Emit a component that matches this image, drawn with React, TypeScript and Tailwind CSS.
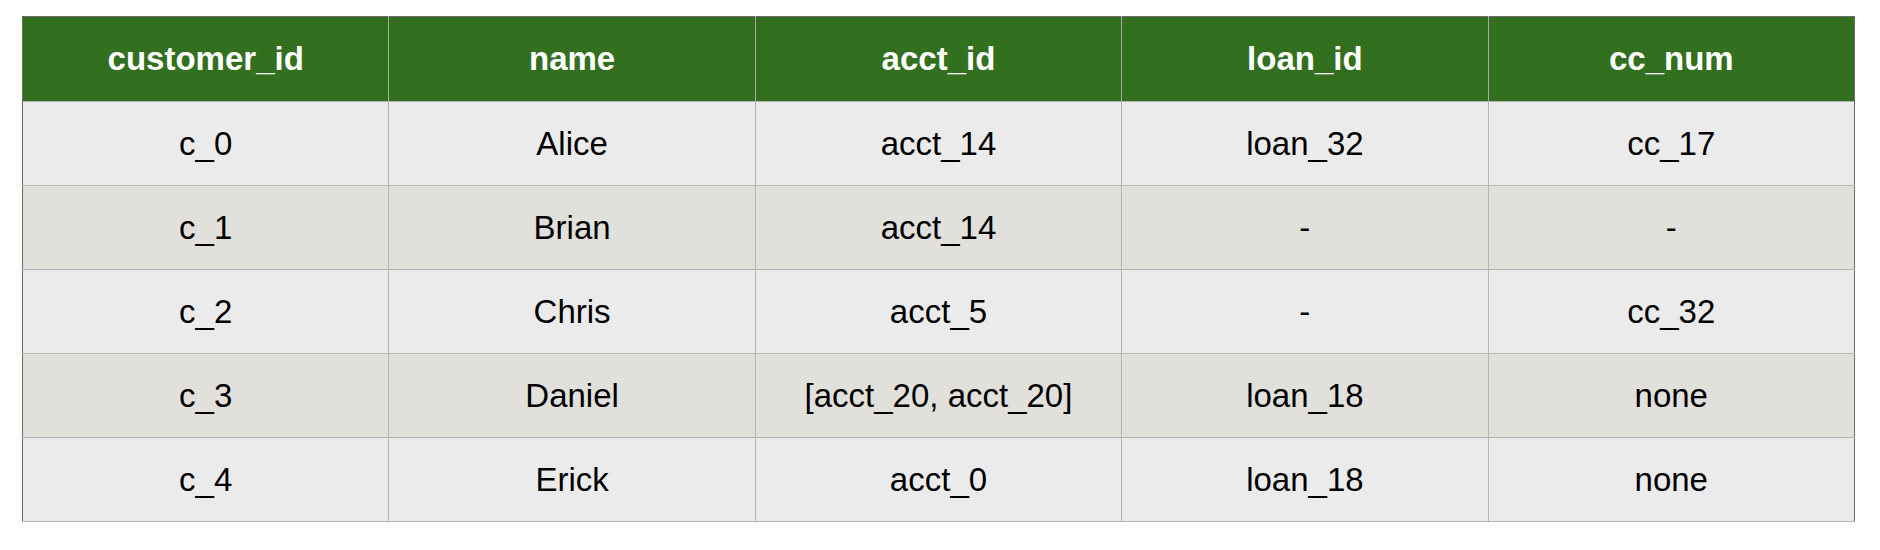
const columns = ['customer_id', 'name', 'acct_id', 'loan_id', 'cc_num'];

const rows = [
  ['c_0', 'Alice', 'acct_14', 'loan_32', 'cc_17'],
  ['c_1', 'Brian', 'acct_14', '-', '-'],
  ['c_2', 'Chris', 'acct_5', '-', 'cc_32'],
  ['c_3', 'Daniel', '[acct_20, acct_20]', 'loan_18', 'none'],
  ['c_4', 'Erick', 'acct_0', 'loan_18', 'none'],
];

export default function App() {
  return (
    <div className="w-[1880px] h-[550px] bg-white pt-[16px] pl-[22px] font-['Liberation_Sans',Arial,sans-serif]">
      <table className="w-[1833px] table-fixed border-collapse border border-[#6b6b6b] text-[33px] text-black">
        <thead>
          <tr className="h-[85px] bg-[#326f1f]">
            {columns.map((col) => (
              <th
                key={col}
                className="border-x border-[#a8a8a8] first:border-l-[#6b6b6b] last:border-r-[#6b6b6b] font-bold text-white text-center align-middle"
              >
                {col}
              </th>
            ))}
          </tr>
        </thead>
        <tbody>
          {rows.map((row, i) => (
            <tr
              key={i}
              className={`h-[84px] ${i % 2 === 0 ? 'bg-[#ebebeb]' : 'bg-[#e1e0db]'}`}
            >
              {row.map((cell, j) => (
                <td
                  key={j}
                  className="border border-[#b4b4b4] first:border-l-[#6b6b6b] last:border-r-[#6b6b6b] text-center align-middle"
                >
                  {cell}
                </td>
              ))}
            </tr>
          ))}
        </tbody>
      </table>
    </div>
  );
}
